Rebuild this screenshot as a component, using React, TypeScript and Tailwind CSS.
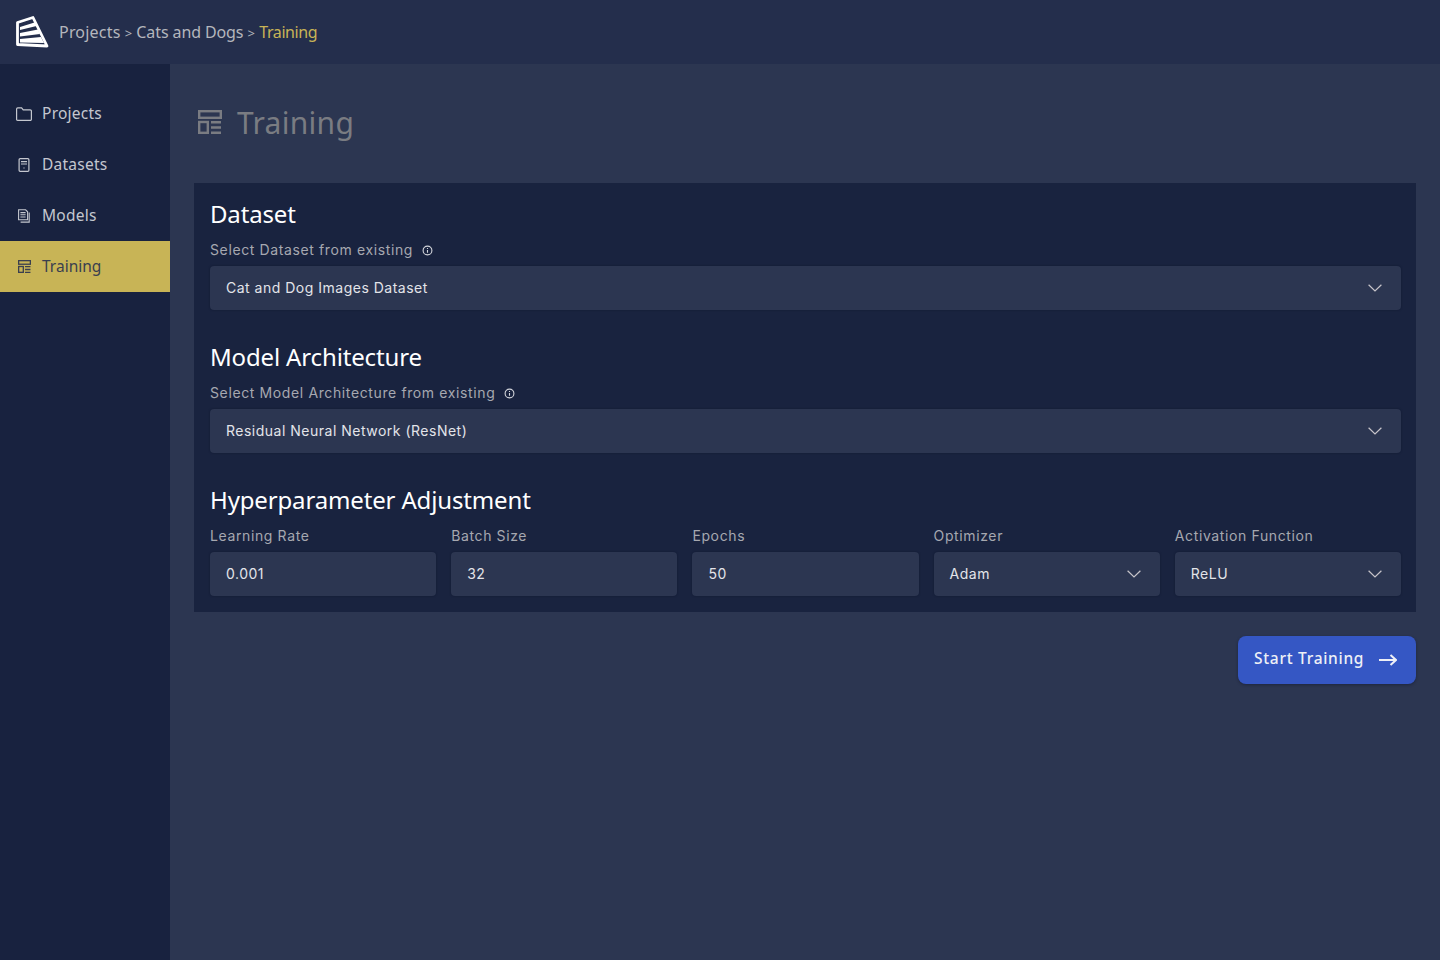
import React from "react";

const Logo = () => (
  <svg width="34" height="34" viewBox="0 0 34 34" className="shrink-0">
    <path d="M2.5 7.5 L18 2.5 L32 31 L2.5 29.5 Z" fill="none" stroke="#fff" strokeWidth="2.8" strokeLinejoin="round" />
    <path d="M5 12 L19.5 7.5 L21.5 11 L5 15 Z" fill="#fff" />
    <path d="M5 18 L23 14.5 L25 19 L5 21.5 Z" fill="#fff" />
    <path d="M5 24 L26 22 L29 28 L5 27.5 Z" fill="#fff" />
  </svg>
);

const FolderIcon = () => (
  <svg width="16" height="14" viewBox="0 0 16 14" fill="none" stroke="#c4c7cf" strokeWidth="1.2" className="shrink-0">
    <path d="M0.6 12.4V2A1.2 1.2 0 0 1 1.8 0.8H5.6L7.2 2.8H14.2A1.2 1.2 0 0 1 15.4 4V12.2A1.2 1.2 0 0 1 14.2 13.4H1.6A1 1 0 0 1 0.6 12.4Z" />
  </svg>
);

const TrainingIcon = ({ size, color }: { size: number; color: string }) => (
  <svg width={size} height={size} viewBox="0 0 24 24" fill="none" stroke={color} strokeWidth="2.4">
    <rect x="1.2" y="1.2" width="21.6" height="6.6" />
    <rect x="1.2" y="12" width="8.6" height="10.8" />
    <path d="M13 12.2H23M13 17.5H23M13 22.8H23" />
  </svg>
);

const DatasetIcon = () => (
  <svg width="14" height="14" viewBox="0 0 14 14" fill="none" stroke="#c4c7cf" strokeWidth="1.2">
    <rect x="2.1" y="0.7" width="9.8" height="12.6" rx="1" />
    <path d="M4 3.6H10M4 6H10M7 9.6V10.4" />
  </svg>
);

const ModelIcon = () => (
  <svg width="14" height="14" viewBox="0 0 14 14" fill="none" stroke="#c4c7cf" strokeWidth="1.1">
    <path d="M1.6 0.8H8.6L10.6 2.8V10.8H1.6Z" />
    <path d="M3.4 3.6H8.6M3.4 5.8H8.6M3.4 8H8.6" />
    <path d="M12.2 3.4V13.1H3.6" />
  </svg>
);

const Info = () => (
  <svg width="11" height="11" viewBox="0 0 11 11" fill="none" stroke="#d4d6dc" strokeWidth="1.1" className="ml-[9px] translate-y-px">
    <circle cx="5.5" cy="5.5" r="4.4" />
    <path d="M5.5 5V7.8M5.5 3V4" />
  </svg>
);

const Chevron = () => (
  <svg width="14" height="8" viewBox="0 0 14 8" fill="none" stroke="#c8c5ca" strokeWidth="1.2" className="shrink-0">
    <path d="M0.6 0.8L7 7L13.4 0.8" />
  </svg>
);

const NavItem = ({ icon, label, active }: { icon: React.ReactNode; label: string; active?: boolean }) => (
  <div className={`flex h-[51px] items-center pl-4 ${active ? "bg-[#c8b456] text-[#3a3f4f]" : "text-[#c4c7cf]"}`}>
    <span className="flex w-4 justify-center">{icon}</span>
    <span className={`ml-[10px] text-[15.5px] ${active ? "tracking-[0px]" : "tracking-[0.25px]"}`}>{label}</span>
  </div>
);

const Box = ({ children }: { children: React.ReactNode }) => (
  <div className="flex h-[44px] items-center justify-between rounded-[4px] bg-[#2c3651] pl-4 pr-[19px] font-['Inter',sans-serif] text-[14px] tracking-[0.5px] text-[#e3e4e9] shadow-[0_0_2px_rgba(10,15,35,0.5)]">
    {children}
  </div>
);

const Select = ({ value }: { value: string }) => (
  <Box>
    <span className="-translate-y-px">{value}</span>
    <Chevron />
  </Box>
);

const Label = ({ children, info }: { children: React.ReactNode; info?: boolean }) => (
  <div className="flex h-[16px] -translate-y-px items-center font-['Inter',sans-serif] text-[14px] tracking-[0.62px] text-[#a6a8b0]">
    {children}
    {info && <Info />}
  </div>
);

const Heading = ({ children }: { children: React.ReactNode }) => (
  <h2 className="h-[33px] text-[24px] leading-[33px] tracking-[-0.15px] text-white">{children}</h2>
);

export default function App() {
  return (
    <div className="flex min-h-[960px] flex-col bg-[#2c3651] font-['Noto_Sans',sans-serif]">
      <header className="flex h-16 items-center bg-[#242e4c] pl-[15px] text-[16px] text-[#b4b6bd]">
        <Logo />
        <span className="ml-[10px]">
          <span className="tracking-[0.2px]">Projects</span> <span className="text-[13px]">&gt;</span>{" "}
          <span className="tracking-[-0.1px]">Cats and Dogs</span> <span className="text-[13px]">&gt;</span>{" "}
          <span className="tracking-[-0.4px] text-[#c8b456]">Training</span>
        </span>
      </header>
      <div className="flex flex-1">
        <aside className="w-[170px] shrink-0 bg-[#18223f] pt-6">
          <NavItem icon={<FolderIcon />} label="Projects" />
          <NavItem icon={<DatasetIcon />} label="Datasets" />
          <NavItem icon={<ModelIcon />} label="Models" />
          <NavItem icon={<TrainingIcon size={13} color="#3a3f4f" />} label="Training" active />
        </aside>
        <main className="flex-1 px-6 pt-[37px]">
          <div className="flex h-[42px] items-center pl-1 text-[#7a7c82]">
            <TrainingIcon size={24} color="#7a7c82" />
            <h1 className="ml-[15px] text-[30px] tracking-[0.3px]">Training</h1>
          </div>
          <section className="mt-10 bg-[#19233f] pb-4 pl-4 pr-[15px] pt-[14px]">
            <Heading>Dataset</Heading>
            <div className="mt-3"><Label info>Select Dataset from existing</Label></div>
            <div className="mt-2"><Select value="Cat and Dog Images Dataset" /></div>
            <div className="mt-[30px]"><Heading>Model Architecture</Heading></div>
            <div className="mt-3"><Label info>Select Model Architecture from existing</Label></div>
            <div className="mt-2"><Select value="Residual Neural Network (ResNet)" /></div>
            <div className="mt-[30px]"><Heading>Hyperparameter Adjustment</Heading></div>
            <div className="mt-3 grid grid-cols-5 gap-[15px]">
              {[
                ["Learning Rate", "0.001", false],
                ["Batch Size", "32", false],
                ["Epochs", "50", false],
                ["Optimizer", "Adam", true],
                ["Activation Function", "ReLU", true],
              ].map(([label, value, sel]) => (
                <div key={label as string}>
                  <Label>{label}</Label>
                  <div className="mt-2">
                    {sel ? <Select value={value as string} /> : <Box><span className="-translate-y-px">{value}</span></Box>}
                  </div>
                </div>
              ))}
            </div>
          </section>
          <div className="mt-6 flex justify-end">
            <button className="flex h-12 w-[178px] items-center rounded-[8px] bg-[#3557c4] pl-4 text-[15.5px] font-medium tracking-[0.7px] text-[#eef0f6] shadow-[0_1px_3px_rgba(10,15,35,0.4)]">
              <span className="-translate-y-px">Start Training</span>
              <svg width="18" height="12" viewBox="0 0 18 12" fill="none" stroke="#eef0f6" strokeWidth="2" className="ml-[15px] shrink-0">
                <path d="M0 6H17M11.5 1L17 6L11.5 11" />
              </svg>
            </button>
          </div>
        </main>
      </div>
    </div>
  );
}
